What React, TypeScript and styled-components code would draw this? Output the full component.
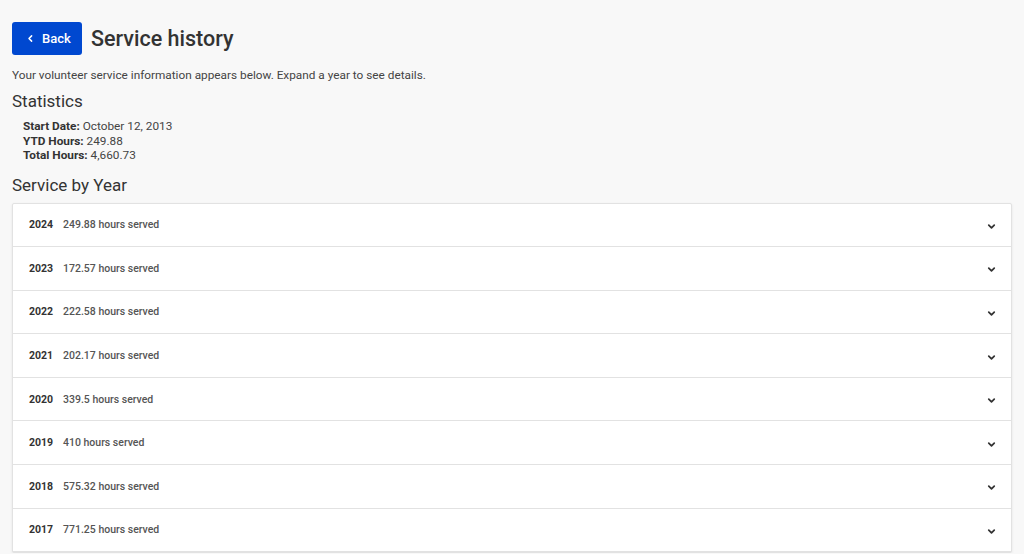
import React from "react";
import styled, { createGlobalStyle } from "styled-components";

const Global = createGlobalStyle`
  html, body { margin: 0; padding: 0; background: #f8f8f8; }
  body { font-family: Roboto, "Liberation Sans", Arial, sans-serif; color: #333; }
`;

const Page = styled.div`
  padding: 22px 12px 0 12px;
  display: flex;
  flex-direction: column;
`;

const Header = styled.div`
  display: flex;
  align-items: center;
  gap: 9px;
`;

const BackButton = styled.button`
  display: flex;
  align-items: center;
  gap: 7px;
  height: 33px;
  width: 70px;
  padding: 0 0 0 14px;
  border: none;
  border-radius: 3px;
  background: #0048d0;
  color: #fff;
  font-family: inherit;
  font-weight: 500;
  font-size: 13px;
  cursor: pointer;
`;

const Title = styled.h1`
  margin: 0;
  font-size: 21.5px;
  font-weight: 500;
  color: #333;
`;

const Intro = styled.p`
  margin: 12px 0 0 0;
  font-size: 11.8px;
  color: #444;
  line-height: 16px;
`;

const SectionTitle = styled.h2<{ $top: number }>`
  margin: ${(p) => p.$top}px 0 0 0;
  font-size: 17px;
  font-weight: 400;
  color: #333;
  line-height: 22px;
`;

const StatList = styled.div`
  margin: 7px 0 0 11px;
  display: flex;
  flex-direction: column;
  font-size: 11.8px;
  line-height: 14.5px;
  color: #444;
`;

const StatLabel = styled.b`
  font-weight: 700;
  color: #333;
`;

const Card = styled.div`
  margin-top: 7px;
  background: #fff;
  border: 1px solid #e2e2e2;
  border-radius: 2px;
  box-shadow: 0 1px 3px rgba(0, 0, 0, 0.08);
`;

const Row = styled.div`
  height: 43.6px;
  display: flex;
  align-items: center;
  padding: 0 14px 0 16px;
  border-bottom: 1px solid #e2e2e2;
  box-sizing: border-box;
  font-size: 10.5px;
`;

const Year = styled.span`
  font-weight: 700;
  color: #333;
  width: 34px;
`;

const Hours = styled.span`
  font-weight: 500;
  color: #555;
  flex: 1;
`;

const ChevronBox = styled.span`
  display: flex;
  margin-top: 3px;
`;

const Chevron = () => (
  <ChevronBox>
    <svg width="11" height="11" viewBox="0 0 24 24" fill="none" stroke="#333" strokeWidth="3.8" strokeLinecap="round" strokeLinejoin="round">
      <polyline points="6 9 12 15 18 9" />
    </svg>
  </ChevronBox>
);

const years: [string, string][] = [
  ["2024", "249.88"],
  ["2023", "172.57"],
  ["2022", "222.58"],
  ["2021", "202.17"],
  ["2020", "339.5"],
  ["2019", "410"],
  ["2018", "575.32"],
  ["2017", "771.25"],
];

export default function App() {
  return (
    <>
      <Global />
      <Page>
        <Header>
          <BackButton>
            <svg width="9" height="9" viewBox="0 0 24 24" fill="none" stroke="#fff" strokeWidth="4" strokeLinecap="round" strokeLinejoin="round">
              <polyline points="15 5 8 12 15 19" />
            </svg>
            Back
          </BackButton>
          <Title>Service history</Title>
        </Header>
        <Intro>Your volunteer service information appears below. Expand a year to see details.</Intro>
        <SectionTitle $top={7}>Statistics</SectionTitle>
        <StatList>
          <span><StatLabel>Start Date:</StatLabel> October 12, 2013</span>
          <span><StatLabel>YTD Hours:</StatLabel> 249.88</span>
          <span><StatLabel>Total Hours:</StatLabel> 4,660.73</span>
        </StatList>
        <SectionTitle $top={11}>Service by Year</SectionTitle>
        <Card>
          {years.map(([y, h]) => (
            <Row key={y}>
              <Year>{y}</Year>
              <Hours>{h} hours served</Hours>
              <Chevron />
            </Row>
          ))}
        </Card>
      </Page>
    </>
  );
}
